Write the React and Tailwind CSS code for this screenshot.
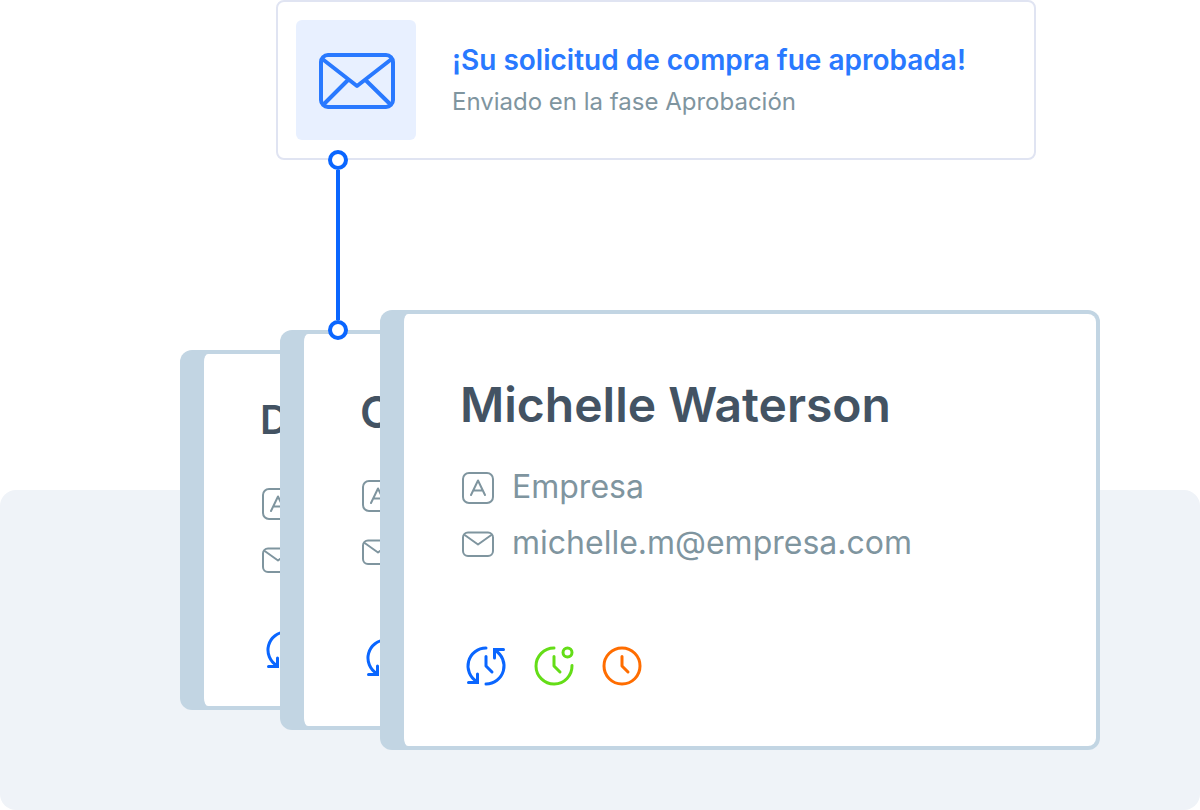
const ACTIONS = ['recurring', 'done', 'late']

const CARDS = [
  {
    name: 'D',
    card: 'w-[100px] shrink-0 rounded-l-xl',
    panel: 'pt-[38px] pb-[30px] rounded-[4px_0_0_4px/8px_0_0_8px]',
    title: 'mb-[27px] text-[40px]',
    actions: 'mt-[37px]',
  },
  {
    name: 'C',
    card: 'w-[100px] shrink-0 rounded-l-xl',
    panel: 'pt-[50px] pb-[42px] rounded-[4px_0_0_4px/8px_0_0_8px]',
    title: 'mb-[27px] text-[44px]',
    actions: 'mt-[53px]',
  },
  {
    name: 'Michelle Waterson',
    company: 'Empresa',
    email: 'michelle.m@empresa.com',
    card: 'flex-1 pr-1 rounded-xl',
    panel: 'pt-[63px] pb-[54px] rounded-[4px_8px_8px_4px/8px]',
    title: 'mb-[26px] text-5xl',
    actions: 'mt-[69px]',
  },
]

function EnvelopeIcon() {
  return (
    <svg viewBox="0 0 120 120" className="size-[120px] shrink-0 rounded-md bg-[#e8f0ff] text-[#2979ff]"
      fill="none" stroke="currentColor" strokeWidth="4" strokeLinejoin="round" aria-hidden="true">
      <rect x="25" y="35" width="72" height="52" rx="7" />
      <path d="M27 39.5L61 66l34-26.5M27 85l24.5-24.5M95 85L70 60.5" />
    </svg>
  )
}

function CompanyIcon() {
  return (
    <svg viewBox="0 0 36 36" className="size-9 shrink-0" fill="none" stroke="currentColor"
      strokeWidth="2" strokeLinecap="round" strokeLinejoin="round" aria-hidden="true">
      <rect x="3" y="4" width="30" height="30" rx="6" />
      <path d="M11 26l7-14.5L25 26M13.5 21.5h9" />
    </svg>
  )
}

function MailIcon() {
  return (
    <svg viewBox="0 0 36 36" className="size-9 shrink-0" fill="none" stroke="currentColor"
      strokeWidth="2" strokeLinejoin="round" aria-hidden="true">
      <rect x="3" y="7.5" width="30" height="23.5" rx="5" />
      <path d="M4 9.5l14 10 14-10" />
    </svg>
  )
}

function ActionIcon({ type }) {
  const color = {
    recurring: 'text-[#0a66ff]',
    done: 'text-[#64dd17]',
    late: 'text-[#ff6d00]',
  }[type]

  return (
    <svg viewBox="0 0 52 52" className={`size-[52px] shrink-0 ${color}`} fill="none" stroke="currentColor"
      strokeWidth="3" strokeLinecap="round" strokeLinejoin="round" aria-hidden="true">
      {type === 'recurring' && (
        <>
          <path d="M26 8a18 18 0 0 0-9 33.6" />
          <path d="M26 44a18 18 0 0 0 9-33.6" />
          <path d="M8.5 42.5h9V34M43.5 9.5h-9V18" strokeLinejoin="miter" />
        </>
      )}
      {type === 'done' && (
        <>
          <path d="M26 8a18 18 0 1 0 18 17.5" />
          <circle cx="39.5" cy="12.5" r="4.5" />
        </>
      )}
      {type === 'late' && <circle cx="26" cy="26" r="18" />}
      <path d="M26 16.5V26l6 6" />
    </svg>
  )
}

function Notification() {
  return (
    <section className="ml-24 mr-16 flex items-center gap-9 rounded-lg border-2 border-[#e0e4f2] bg-white p-[18px]">
      <EnvelopeIcon />
      <div className="pt-0.5">
        <h1 className="text-[28px] leading-[42px] font-semibold text-[#2979ff]">¡Su solicitud de compra fue aprobada!</h1>
        <p className="text-2xl leading-[42px] text-[#7f959f]">Enviado en la fase Aprobación</p>
      </div>
    </section>
  )
}

function Connector() {
  return (
    <div className="relative z-10 ml-[148px] -mt-[10px] -mb-[30px] flex h-[190px] w-5 flex-col items-center">
      <span className="size-5 shrink-0 rounded-full border-4 border-[#0a66ff] bg-white" />
      <span className="w-1 flex-1 bg-[#0a66ff]" />
      <span className="size-5 shrink-0 rounded-full border-4 border-[#0a66ff] bg-white" />
    </div>
  )
}

function ContactCard({ contact }) {
  return (
    <article className={`overflow-hidden bg-[#c2d5e3] py-1 pl-6 ${contact.card}`}>
      <div className={`overflow-hidden bg-white pl-14 ${contact.panel}`}>
        <h2 className={`leading-[56px] font-semibold whitespace-nowrap text-[#435363] ${contact.title}`}>
          {contact.name}
        </h2>
        <ul className="text-[32px] leading-[56px] text-[#7f959f]">
          <li className="flex h-14 items-center gap-4">
            <CompanyIcon />
            {contact.company}
          </li>
          <li className="flex h-14 items-center gap-4">
            <MailIcon />
            {contact.email}
          </li>
        </ul>
        <div className={`flex gap-4 ${contact.actions}`}>
          {ACTIONS.map((type) => (
            <ActionIcon key={type} type={type} />
          ))}
        </div>
      </div>
    </article>
  )
}

export default function App() {
  return (
    <main className="grid min-h-screen bg-white font-['Inter',sans-serif]">
      {/* backdrop shares the grid cell with the content */}
      <div className="col-start-1 row-start-1 h-80 self-end rounded-2xl bg-[#eff3f8]" />

      <div className="col-start-1 row-start-1 pl-[15%] pr-[8.3333%] pb-[60px]">
        <Notification />
        <Connector />
        <div className="flex items-center">
          {CARDS.map((contact) => (
            <ContactCard key={contact.name} contact={contact} />
          ))}
        </div>
      </div>
    </main>
  )
}
